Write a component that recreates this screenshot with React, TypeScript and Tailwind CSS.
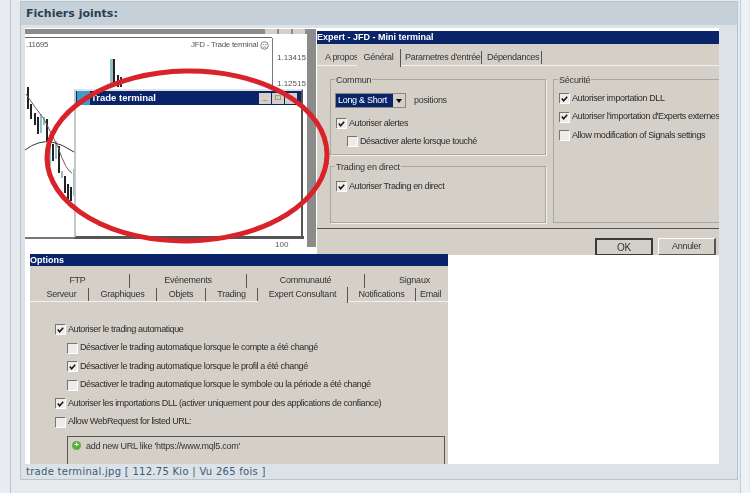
const sans = { fontFamily: '"Liberation Sans", Arial, sans-serif' };

function Check({ checked = false, label, className = "" }: { checked?: boolean; label: string; className?: string }) {
  return (
    <div className={`flex h-[14px] items-center gap-[3px] text-[9px] leading-none tracking-[-0.38px] text-[#2b2b2b] ${className}`}>
      <span className="flex h-[10px] w-[10px] shrink-0 items-center justify-center border-t border-l border-[#77746e] bg-[#eeece8] shadow-[1px_1px_0_#fff]">
        {checked ? (
          <svg viewBox="0 0 10 10" className="h-[10px] w-[10px]">
            <path d="M2 4.5 L4 7 L8 2.5" fill="none" stroke="#111" strokeWidth="1.6" />
          </svg>
        ) : null}
      </span>
      <span className="whitespace-nowrap">{label}</span>
    </div>
  );
}

function Legend({ children }: { children: string }) {
  return (
    <span className="absolute -top-[6px] left-[4px] bg-[#d4d0c8] px-[1px] text-[9px] leading-[12px] tracking-[-0.2px] whitespace-nowrap text-[#333]">
      {children}
    </span>
  );
}

function WinButton({ glyph }: { glyph: string }) {
  return (
    <span className="flex h-[11px] w-[12px] items-center justify-center bg-[#d4d0c8] text-[8px] font-bold leading-none text-[#222]">
      {glyph}
    </span>
  );
}

function ChartSketch() {
  const candles = [
    [27, 86, 108, 2, "#222"],
    [30, 103, 118, 2, "#222"],
    [34, 112, 124, 2, "#222"],
    [37, 116, 133, 2, "#222"],
    [40, 113, 132, 2, "#8fc0c4"],
    [43, 116, 124, 2, "#8fc0c4"],
    [46, 118, 140, 2, "#222"],
    [49, 145, 165, 2, "#8fc0c4"],
    [52, 143, 160, 2, "#222"],
    [55, 140, 158, 2, "#8fc0c4"],
    [58, 145, 172, 2, "#222"],
    [61, 170, 177, 2, "#8fc0c4"],
    [64, 175, 192, 2, "#222"],
    [67, 183, 200, 2, "#222"],
    [70, 186, 200, 2, "#222"],
    [73, 168, 195, 2, "#8fc0c4"],
    [110, 58, 85, 3, "#8fc0c4"],
    [113, 58, 85, 2, "#222"],
    [117, 74, 86, 2, "#222"],
    [120, 76, 86, 2, "#333"],
  ] as const;
  return (
    <svg viewBox="25 27 260 215" className="absolute top-0 left-0 h-[215px] w-[260px]">
      {candles.map(([x, y1, y2, w, c]) => (
        <rect key={`${x}-${y1}`} x={x} y={y1} width={w} height={y2 - y1} fill={c} />
      ))}
      <path d="M26 93 Q36 108 44 118 Q50 130 58 146 Q66 170 72 172" fill="none" stroke="#7a5a55" strokeWidth="1" />
      <path d="M25 149 Q38 139 52 141 Q62 143 74 151" fill="none" stroke="#333" strokeWidth="1" />
    </svg>
  );
}

function ChartWindow() {
  return (
    <div className="absolute top-0 left-0 h-[219px] w-[282px] bg-white" style={sans}>
      <div className="mt-[1px] flex h-[5px] items-start justify-end gap-[2px] overflow-hidden bg-[#8b8b8b] pr-[2px]">
        <WinButton glyph="" />
        <WinButton glyph="" />
        <WinButton glyph="" />
      </div>
      <div className="mt-[3px] h-[1px] w-[247px] bg-[#666]" />
      <div className="flex h-[14px] w-[247px] items-center justify-between text-[8px] tracking-[-0.3px] text-[#555]">
        <span className="ml-[1px] leading-none">.11695</span>
        <span className="mr-[3px] flex items-center gap-[2px] leading-none">
          JFD - Trade terminal
          <svg viewBox="0 0 10 10" className="h-[9px] w-[9px]">
            <circle cx="5" cy="5" r="4.2" fill="none" stroke="#555" strokeWidth="0.8" />
            <circle cx="3.5" cy="4" r="0.6" fill="#555" />
            <circle cx="6.5" cy="4" r="0.6" fill="#555" />
            <path d="M3 7.2 Q5 5.8 7 7.2" fill="none" stroke="#555" strokeWidth="0.7" />
          </svg>
        </span>
      </div>
      <ChartSketch />
      {/* price axis */}
      <div className="absolute top-[10px] left-[247px] h-[200px] w-[1px] bg-[#777]" />
      <span className="absolute top-[25px] left-[252px] text-[8px] leading-[10px] text-[#555]">1.13415</span>
      <span className="absolute top-[51px] left-[252px] text-[8px] leading-[10px] text-[#555]">1.12515</span>
      <span className="absolute top-[212px] left-[250px] text-[8px] leading-[10px] text-[#555]">100</span>
      <div className="absolute top-[209px] left-0 h-[2px] w-[248px] bg-[#777]" />
      <div className="absolute top-[208px] left-[49px] h-[3px] w-[230px] bg-[#555]" />

      {/* floating terminal */}
      <div className="absolute top-[61px] left-[49px] flex h-[149px] w-[229px] flex-col border-t-2 border-r-2 border-b-2 border-l-2 border-t-[#dfe3e6] border-r-[#555] border-b-[#555] border-l-[#c4c8ca] bg-white">
        <div className="flex h-[14px] items-center bg-[#0a246a] pr-[4px]">
          <span className="mr-[1px] ml-[1px] h-[14px] w-[13px] bg-[#3c9fca]" />
          <span className="flex-1 text-[9.5px] leading-none font-bold text-white">Trade terminal</span>
          <div className="flex gap-[1px]">
            <WinButton glyph="_" />
            <WinButton glyph="□" />
            <WinButton glyph="×" />
          </div>
        </div>
      </div>
    </div>
  );
}

function ExpertDialog() {
  return (
    <div className="absolute top-[3px] left-[292px] flex h-[224px] w-[402px] flex-col overflow-hidden bg-[#d4d0c8] text-[9px] tracking-[-0.3px] text-[#333]" style={sans}>
      <div className="flex h-[13px] shrink-0 items-center bg-[#0a246a] text-[9px] leading-none font-bold tracking-normal text-white">
        Expert - JFD - Mini terminal
      </div>
      <div className="mt-[6px] flex h-[16px] shrink-0 items-center border-b border-[#f2f0ec] pl-[8px] whitespace-nowrap">
        <span className="w-[32px] shrink-0">A propos</span>
        <span className="flex h-[18px] w-[44px] shrink-0 items-center justify-center border-r border-[#555] bg-[#d4d0c8]">Général</span>
        <span className="ml-[4px] w-[77px] shrink-0 border-r border-[#555]">Parametres d'entrée</span>
        <span className="ml-[5px] w-[55px] shrink-0 border-r border-[#555]">Dépendances</span>
      </div>
      <div className="mt-[13px] flex gap-[7px] pl-[13px]">
        <div className="flex w-[216px] shrink-0 flex-col gap-[11px]">
          <section className="relative h-[76px] border border-[#aaa7a0] shadow-[1px_1px_0_#f2f0ec]">
            <Legend>Commun</Legend>
            <div className="mt-[13px] ml-[4px] flex items-center">
              <span className="flex h-[15px] w-[71px] shrink-0 items-center justify-between border border-[#888] bg-[#0a246a] pl-[2px] whitespace-nowrap text-white">
                Long &amp; Short
                <span className="flex h-[13px] w-[12px] items-center justify-center bg-[#d4d0c8]">
                  <span className="h-0 w-0 border-x-[3px] border-t-[4px] border-x-transparent border-t-black" />
                </span>
              </span>
              <span className="ml-[8px]">positions</span>
            </div>
            <Check checked label="Autoriser alertes" className="mt-[8px] ml-[5px]" />
            <Check label="Désactiver alerte lorsque touché" className="mt-[4px] ml-[16px]" />
          </section>
          <section className="relative h-[57px] border border-[#aaa7a0] shadow-[1px_1px_0_#f2f0ec]">
            <Legend>Trading en direct</Legend>
            <Check checked label="Autoriser Trading en direct" className="mt-[12px] ml-[5px]" />
          </section>
        </div>
        <section className="relative h-[144px] w-[172px] shrink-0 border border-[#aaa7a0]">
          <Legend>Sécurité</Legend>
          <div className="mt-[11px] ml-[5px] flex flex-col gap-[4.5px]">
            <Check checked label="Autoriser importation DLL" />
            <Check checked label="Autoriser l'importation d'Experts externes" />
            <Check label="Allow modification of Signals settings" />
          </div>
        </section>
      </div>
      <div className="mt-[5px] h-[1px] shrink-0 bg-[#555]" />
      <div className="mt-[9px] flex justify-end gap-[5px] pr-[3px]">
        <span className="flex h-[18px] w-[58px] items-center justify-center border-2 border-[#3a3a3a] text-[10px] text-[#333]">OK</span>
        <span className="flex h-[18px] w-[58px] items-center justify-center border border-r-2 border-b-2 border-white border-r-[#555] border-b-[#555]">
          Annuler
        </span>
      </div>
    </div>
  );
}

const topTabs = [
  { label: "FTP", w: "w-[94px] pr-[10px]" },
  { label: "Evénements", w: "w-[117px]" },
  { label: "Communauté", w: "w-[118px]" },
  { label: "Signaux", w: "w-[100px]" },
];

const bottomTabs = [
  { label: "Serveur", w: "w-[54px]" },
  { label: "Graphiques", w: "w-[68px]" },
  { label: "Objets", w: "w-[49px]" },
  { label: "Trading", w: "w-[52px]" },
];

function OptionsDialog() {
  return (
    <div className="absolute top-[226px] left-[5px] flex h-[210px] w-[418px] flex-col overflow-hidden bg-[#d4d0c8] text-[9px] tracking-[-0.25px] text-[#333]" style={sans}>
      <div className="flex h-[12px] shrink-0 items-center bg-[#0a246a] text-[9px] leading-none font-bold tracking-normal text-white">Options</div>
      <div className="mt-[8px] flex h-[14px] shrink-0 pl-[6px] whitespace-nowrap">
        {topTabs.map((tab) => (
          <span key={tab.label} className={`${tab.w} flex shrink-0 items-center justify-center border-r border-[#555] text-center`}>
            {tab.label}
          </span>
        ))}
      </div>
      <div className="flex h-[14px] shrink-0 items-center border-b border-[#f2f0ec] pl-[5px] whitespace-nowrap">
        {bottomTabs.map((tab) => (
          <span key={tab.label} className={`${tab.w} flex shrink-0 items-center justify-center border-r border-[#555]`}>
            {tab.label}
          </span>
        ))}
        <span className="flex h-[16px] w-[90px] shrink-0 items-center justify-center border-r border-[#555] bg-[#d4d0c8]">Expert Consultant</span>
        <span className="w-[68px] shrink-0 border-r border-[#555] text-center">Notifications</span>
        <span className="pl-[4px]">Email</span>
      </div>
      <div className="mt-[20px] ml-[25px] flex flex-col gap-[4.6px]">
        <Check checked label="Autoriser le trading automatique" />
        <Check label="Désactiver le trading automatique lorsque le compte a été changé" className="ml-[12px]" />
        <Check checked label="Désactiver le trading automatique lorsque le profil a été changé" className="ml-[12px]" />
        <Check label="Désactiver le trading automatique lorsque le symbole ou la période a été changé" className="ml-[12px]" />
        <Check checked label="Autoriser les importations DLL (activer uniquement pour des applications de confiance)" />
        <Check label="Allow WebRequest for listed URL:" />
      </div>
      <div className="mt-[7px] mr-[3px] ml-[37px] flex flex-1 items-start gap-[5px] border-t border-r border-l border-[#555] pt-[4px] pl-[4px]">
        <span className="flex h-[9px] w-[9px] items-center justify-center rounded-full bg-[#5cae3e] text-[8px] leading-none font-bold text-white">+</span>
        <span className="leading-[10px]">add new URL like 'https://www.mql5.com'</span>
      </div>
    </div>
  );
}

export default function App() {
  return (
    <div className="flex h-[493px] w-[750px] overflow-hidden bg-[#e5eaef]">
      <div className="w-[11px] shrink-0 border-r border-[#b9c3cc] bg-[#e9edf1]" />
      <main className="mt-[1px] ml-[9px] flex h-[479px] w-[718px] shrink-0 flex-col border border-[#b9c4cd] bg-[#dbe3e9] pr-[18px] pl-[4px]">
        <h3 className="-mr-[18px] -ml-[4px] flex h-[23px] shrink-0 items-center bg-[#c5d0d9] pt-[2px] pl-[5px] font-['DejaVu_Sans'] text-[11px] font-bold text-[#2e4050]">
          Fichiers joints:
        </h3>
        <div className="relative mt-[3px] h-[436px] w-[694px] shrink-0 overflow-hidden bg-white blur-[0.3px]">
          <ChartWindow />
          <div className="absolute top-[1px] left-[282px] h-[218px] w-[9px] bg-[#8b8b8b]" />
          <ExpertDialog />
          <OptionsDialog />
          <svg viewBox="0 0 300 190" className="absolute top-[39px] left-[18px] h-[190px] w-[300px]">
            <ellipse cx="144" cy="89" rx="140" ry="85" fill="none" stroke="#d8232a" strokeWidth="5" transform="rotate(-1 144 89)" />
          </svg>
        </div>
        <p className="mt-[1px] ml-[1px] font-['DejaVu_Sans'] text-[10px] leading-[14px] tracking-[0.28px] text-[#3f5a72]">
          trade terminal.jpg [ 112.75 Kio | Vu 265 fois ]
        </p>
      </main>
      <div className="ml-[2px] w-[9px] border-l border-[#c4ced6] bg-[#eef2f6]" />
    </div>
  );
}
